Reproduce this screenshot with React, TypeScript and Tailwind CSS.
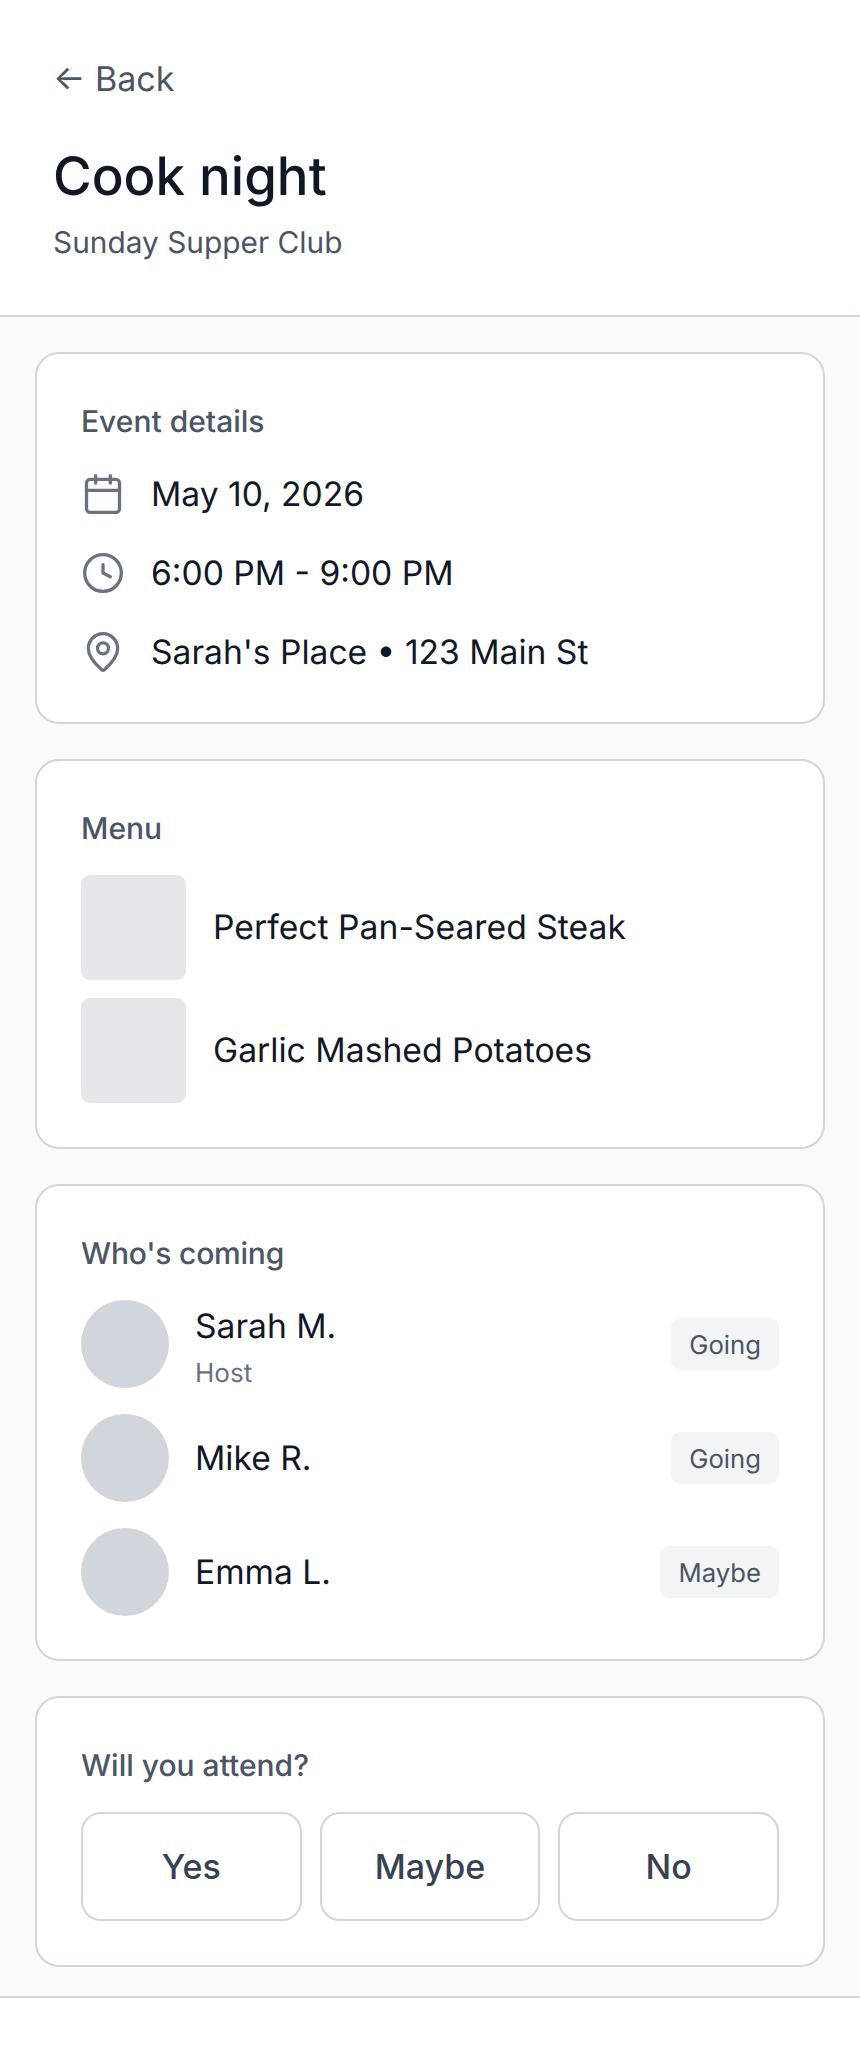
import React from 'react';

const people = [
    { name: 'Sarah M.', note: 'Host', status: 'Going' },
    { name: 'Mike R.', note: '', status: 'Going' },
    { name: 'Emma L.', note: '', status: 'Maybe' },
];

const cardClass = 'bg-white border-2 border-gray-300 rounded-[24px] px-[44px]';

const App: React.FC = () => {
    return (
        <div className="min-h-screen bg-white flex flex-col font-['Inter',sans-serif] [text-rendering:geometricPrecision]">
            {/* Header */}
            <div className="h-[317px] border-b-2 border-gray-300 px-[53px] pt-[57px]">
                <div className="text-[34px] leading-[45px] text-gray-600">← Back</div>
                <h1 className="mt-[40px] text-[52.8px] leading-[68px] font-medium text-gray-900">Cook night</h1>
                <p className="mt-[13px] text-[29.85px] leading-[40px] text-gray-600">Sunday Supper Club</p>
            </div>

            {/* Main */}
            <div className="h-[1681px] bg-gray-50 border-b-2 border-gray-300 px-[35px] pt-[35px] flex flex-col gap-[35px]">
                <section className={`${cardClass} h-[372px] pt-[48px]`}>
                    <h2 className="text-[30px] leading-[40px] font-medium text-gray-600">Event details</h2>
                    <div className="mt-[24px] flex flex-col gap-[23px] text-[33.6px] leading-[54px] text-gray-900">
                        <div className="flex items-center gap-[26px] h-[56px]">
                            <svg className="text-gray-500 shrink-0" width="44" height="44" viewBox="0 0 24 24" fill="none" stroke="currentColor" strokeWidth="1.8" strokeLinecap="round" strokeLinejoin="round">
                                <path d="M8 2v4" />
                                <path d="M16 2v4" />
                                <rect width="18" height="18" x="3" y="4" rx="2" />
                                <path d="M3 10h18" />
                            </svg>
                            <span className="pt-[2px]">May 10, 2026</span>
                        </div>
                        <div className="flex items-center gap-[26px] h-[56px]">
                            <svg className="text-gray-500 shrink-0" width="44" height="44" viewBox="0 0 24 24" fill="none" stroke="currentColor" strokeWidth="1.8" strokeLinecap="round" strokeLinejoin="round">
                                <circle cx="12" cy="12" r="10" />
                                <path d="M12 7.5V12l4 2" />
                            </svg>
                            <span className="pt-[2px]">6:00 PM - 9:00 PM</span>
                        </div>
                        <div className="flex items-center gap-[26px] h-[56px]">
                            <svg className="text-gray-500 shrink-0" width="44" height="44" viewBox="0 0 24 24" fill="none" stroke="currentColor" strokeWidth="1.8" strokeLinecap="round" strokeLinejoin="round">
                                <path d="M20 10c0 4.993-5.539 10.193-7.399 11.799a1 1 0 0 1-1.202 0C9.539 20.193 4 14.993 4 10a8 8 0 0 1 16 0" />
                                <circle cx="12" cy="10" r="3" />
                            </svg>
                            <span className="pt-[2px]">Sarah's Place • 123 Main St</span>
                        </div>
                    </div>
                </section>

                <section className={`${cardClass} h-[390px] pt-[48px]`}>
                    <h2 className="text-[30px] leading-[40px] font-medium text-gray-600">Menu</h2>
                    <div className="mt-[26px] flex flex-col gap-[18px] text-[33.7px] text-gray-900">
                        <div className="flex items-center gap-[27px]">
                            <div className="w-[105px] h-[105px] bg-gray-200 rounded-[9px]"></div>
                            <span className="pt-[1px]">Perfect Pan-Seared Steak</span>
                        </div>
                        <div className="flex items-center gap-[27px]">
                            <div className="w-[105px] h-[105px] bg-gray-200 rounded-[9px]"></div>
                            <span className="pt-[1px]">Garlic Mashed Potatoes</span>
                        </div>
                    </div>
                </section>

                <section className={`${cardClass} h-[477px] pt-[48px]`}>
                    <h2 className="text-[30px] leading-[40px] tracking-[-0.2px] font-medium text-gray-600">Who's coming</h2>
                    <div className="mt-[26px] flex flex-col gap-[26px]">
                        {people.map((p) => (
                            <div key={p.name} className="flex items-center gap-[26px] h-[88px]">
                                <div className="w-[88px] h-[88px] bg-gray-300 rounded-full shrink-0"></div>
                                <div className={p.note ? 'flex-1 pt-[5px]' : 'flex-1 pt-[2px]'}>
                                    <div className="text-[33.6px] leading-[48px] text-gray-900">{p.name}</div>
                                    {p.note && <div className="mt-[5px] text-[26px] leading-[35px] text-gray-500">{p.note}</div>}
                                </div>
                                <span className="bg-gray-100 text-gray-600 text-[25.7px] pt-[3px] leading-[49px] px-[18px] rounded-[9px]">{p.status}</span>
                            </div>
                        ))}
                    </div>
                </section>

                <section className={`${cardClass} h-[271px] pt-[48px]`}>
                    <h2 className="text-[30px] leading-[40px] font-medium text-gray-600">Will you attend?</h2>
                    <div className="mt-[26px] flex gap-[18px]">
                        {['Yes', 'Maybe', 'No'].map((label) => (
                            <button key={label} className="flex-1 h-[109px] bg-white border-2 border-gray-300 rounded-[20px] text-[34px] font-medium text-gray-700">
                                {label}
                            </button>
                        ))}
                    </div>
                </section>
            </div>
        </div>
    );
};

export default App;
